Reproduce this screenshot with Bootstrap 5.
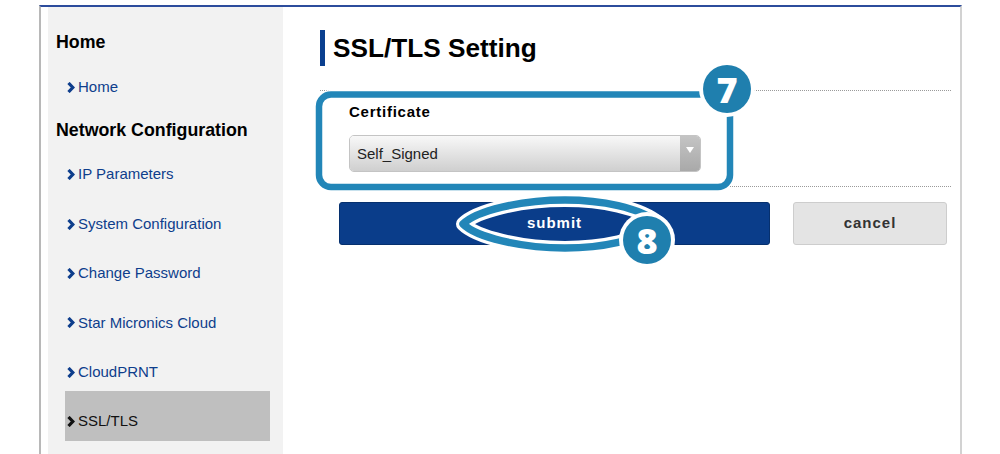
<!doctype html>
<html lang="en"><head><meta charset="utf-8"><title>SSL/TLS Setting</title>
<link href="https://cdn.jsdelivr.net/npm/bootstrap@5.3.0/dist/css/bootstrap.min.css" rel="stylesheet">
<style>
html,body{height:454px;overflow:hidden;background:#fff}
body{font-family:"Liberation Sans",Arial,sans-serif;color:#000}
.stage{height:454px;overflow:hidden;padding:5px 38px 0 39px}
.frame{height:449px;border-top:2px solid #2c4c9c;border-left:2px solid #b8b8b8;border-right:2px solid #d2d2d2;padding-left:7px}
.side{width:235px;background:#f2f2f2;padding:0 13px 0 8px;flex:none}
.side-h{font-size:17.8px;font-weight:700;line-height:22px;margin:0;color:#000}
.side-h.first{padding-top:24px;height:67px}
.side-h.second{height:22px;margin-top:1px}
.side-list{padding:0;margin:0;list-style:none}
.side-list.one{height:44px;margin-left:9px}
.side-list.two{margin-left:9px;margin-top:9px}
.side-a{height:49.4px;display:flex;align-items:center;font-size:15px;color:#0e3e8c;text-decoration:none;padding-left:2px;gap:3px}
.one .side-a{height:27px}
.side-a.on{background:#bfbfbf;color:#111;height:50px;margin-top:-6.3px;padding-top:11px}
.chev{width:8px;height:11px;flex:none;fill:none;stroke:currentColor;stroke-width:3.2}
.main{padding:23px 10px 0 37px}
.ttl{font-size:26.2px;font-weight:700;line-height:36px;height:36px;margin:0;border-left:5px solid #0a3f8f;padding-left:8px}
.sect{border-top:1px dotted #9a9a9a;border-bottom:1px dotted #9a9a9a;margin-top:24px;height:97px;padding:11px 0 0 29px}
.lbl{font-size:15px;font-weight:700;line-height:20px;margin:0 0 13px;letter-spacing:.75px}
.pick{width:352px;height:37px;border:1px solid #c4c4c4;border-radius:5px;overflow:hidden}
.pick-sel{appearance:none;border:0;flex:1;background:linear-gradient(#f8f8f8,#cfcfcf);font:15px "Liberation Sans",Arial,sans-serif;color:#222;padding:0 7px;outline:0}
.pick-arr{width:20px;background:linear-gradient(#c4c4c4,#a9a9a9);flex:none}
.pick-arr svg{width:8px;height:6px;fill:#fff;margin-bottom:8px}
.acts{padding:15px 4px 0 19px;gap:23px}
.go,.stop{height:43px;font-size:15px;font-weight:700;letter-spacing:1px;border-radius:3px;padding:0}
.go{width:431px;background:#0a3d8a;border:1px solid #06306e;color:#fff}
.stop{width:154px;background:#e4e4e4;border:1px solid #cdcdcd;color:#333}
.marks{position:absolute;left:0;top:0;width:1000px;height:454px;pointer-events:none}
.marks text{font-family:"Open Sans","Liberation Sans",sans-serif;font-weight:800;font-size:36px;fill:#fff;text-anchor:middle}
</style></head>
<body class="position-relative">
<div class="stage"><div class="frame d-flex">
<nav class="side">
  <h2 class="side-h first">Home</h2>
  <ul class="side-list one"><li><a class="side-a" href="#"><svg class="chev" viewBox="0 0 8 11"><path d="M1.5 1 5.8 5.5 1.5 10"/></svg>Home</a></li></ul>
  <h2 class="side-h second">Network Configuration</h2>
  <ul class="side-list two">
    <li><a class="side-a" href="#"><svg class="chev" viewBox="0 0 8 11"><path d="M1.5 1 5.8 5.5 1.5 10"/></svg>IP Parameters</a></li>
    <li><a class="side-a" href="#"><svg class="chev" viewBox="0 0 8 11"><path d="M1.5 1 5.8 5.5 1.5 10"/></svg>System Configuration</a></li>
    <li><a class="side-a" href="#"><svg class="chev" viewBox="0 0 8 11"><path d="M1.5 1 5.8 5.5 1.5 10"/></svg>Change Password</a></li>
    <li><a class="side-a" href="#"><svg class="chev" viewBox="0 0 8 11"><path d="M1.5 1 5.8 5.5 1.5 10"/></svg>Star Micronics Cloud</a></li>
    <li><a class="side-a" href="#"><svg class="chev" viewBox="0 0 8 11"><path d="M1.5 1 5.8 5.5 1.5 10"/></svg>CloudPRNT</a></li>
    <li><a class="side-a on" href="#"><svg class="chev" viewBox="0 0 8 11"><path d="M1.5 1 5.8 5.5 1.5 10"/></svg>SSL/TLS</a></li>
  </ul>
</nav>
<main class="main flex-grow-1">
  <h1 class="ttl">SSL/TLS Setting</h1>
  <section class="sect">
    <p class="lbl">Certificate</p>
    <div class="pick d-flex">
      <select class="pick-sel"><option>Self_Signed</option></select>
      <span class="pick-arr d-flex align-items-center justify-content-center"><svg viewBox="0 0 8 6"><path d="M0 0h8L4 6z"/></svg></span>
    </div>
  </section>
  <div class="acts d-flex">
    <button class="btn go" type="button">submit</button>
    <button class="btn stop" type="button">cancel</button>
  </div>
</main>
</div></div>
<svg class="marks" viewBox="0 0 1000 454">
  <rect x="319" y="94.5" width="411" height="92.5" rx="12" fill="none" stroke="#fff" stroke-width="9"/>
  <rect x="319" y="94.5" width="411" height="92.5" rx="12" fill="none" stroke="#2286b8" stroke-width="6.5"/>
  <path d="M463 224C476 211 520 200 565 200 600 200 640 207 660 224 640 241 600 248 565 248 520 248 476 237 463 224Z" fill="none" stroke="#fff" stroke-width="14" stroke-linejoin="round"/>
  <path d="M463 224C476 211 520 200 565 200 600 200 640 207 660 224 640 241 600 248 565 248 520 248 476 237 463 224Z" fill="none" stroke="#2286b8" stroke-width="7.5" stroke-linejoin="round"/>
  <circle cx="727" cy="89" r="28" fill="#fff"/><circle cx="727" cy="89" r="24" fill="#1f7fae"/>
  <text x="727" y="102.500">7</text>
  <circle cx="647" cy="240" r="28" fill="#fff"/><circle cx="647" cy="240" r="24" fill="#1f7fae"/>
  <text x="647" y="253.500">8</text>
</svg>
</body></html>
